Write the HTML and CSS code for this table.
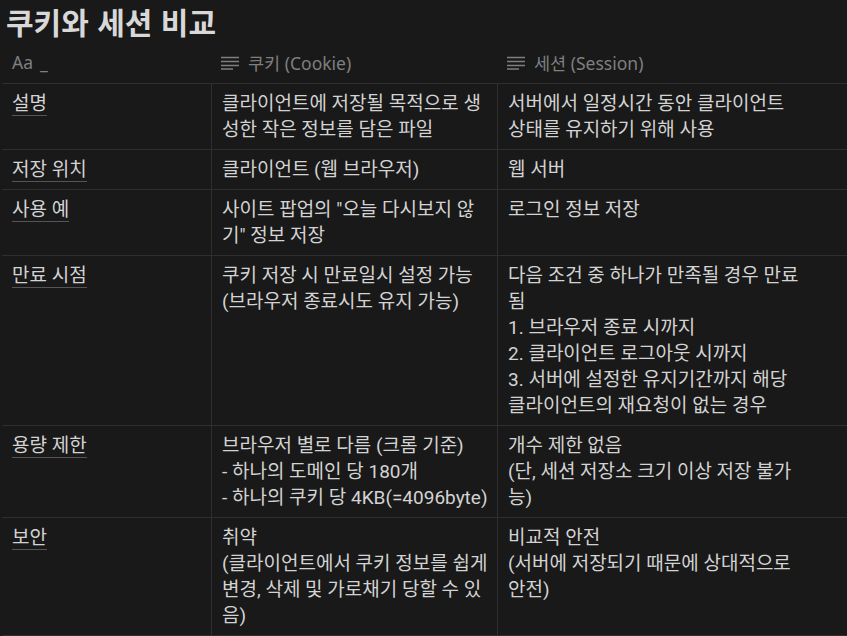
FILE: index.html
```html
<!DOCTYPE html>
<html lang="ko">
<head>
<meta charset="utf-8">
<title>쿠키와 세션 비교</title>
<link rel="stylesheet" href="styles.css">
</head>
<body>
<div class="page">
  <h1 class="title">쿠키와 세션 비교</h1>
  <div class="table">
    <div class="row head">
      <div class="hcell"><span class="aa">Aa</span><span class="hname">_</span></div>
      <div class="hcell"><svg class="ticon" width="18" height="14" viewBox="0 0 18 14"><path d="M0 1.5H18M0 5.5H18M0 9.5H18M0 13H12" stroke="#7f7f7f" stroke-width="1.4" fill="none"/></svg><span class="hname">쿠키 (Cookie)</span></div>
      <div class="hcell"><svg class="ticon" width="18" height="14" viewBox="0 0 18 14"><path d="M0 1.5H18M0 5.5H18M0 9.5H18M0 13H12" stroke="#7f7f7f" stroke-width="1.4" fill="none"/></svg><span class="hname">세션 (Session)</span></div>
      <div class="hcell filler"></div>
    </div>
    <div class="row">
      <div class="cell first"><span class="name">설명</span></div>
      <div class="cell">클라이언트에 저장될 목적으로 생<br>성한 작은 정보를 담은 파일</div>
      <div class="cell">서버에서 일정시간 동안 클라이언트<br>상태를 유지하기 위해 사용</div>
      <div class="cell filler"></div>
    </div>
    <div class="row">
      <div class="cell first"><span class="name">저장 위치</span></div>
      <div class="cell">클라이언트 (웹 브라우저)</div>
      <div class="cell">웹 서버</div>
      <div class="cell filler"></div>
    </div>
    <div class="row">
      <div class="cell first"><span class="name">사용 예</span></div>
      <div class="cell">사이트 팝업의 "오늘 다시보지 않<br>기" 정보 저장</div>
      <div class="cell">로그인 정보 저장</div>
      <div class="cell filler"></div>
    </div>
    <div class="row">
      <div class="cell first"><span class="name">만료 시점</span></div>
      <div class="cell">쿠키 저장 시 만료일시 설정 가능<br>(브라우저 종료시도 유지 가능)</div>
      <div class="cell">다음 조건 중 하나가 만족될 경우 만료<br>됨<br>1. 브라우저 종료 시까지<br>2. 클라이언트 로그아웃 시까지<br>3. 서버에 설정한 유지기간까지 해당<br>클라이언트의 재요청이 없는 경우</div>
      <div class="cell filler"></div>
    </div>
    <div class="row">
      <div class="cell first"><span class="name">용량 제한</span></div>
      <div class="cell">브라우저 별로 다름 (크롬 기준)<br>- 하나의 도메인 당 180개<br>- 하나의 쿠키 당 4KB(=4096byte)</div>
      <div class="cell">개수 제한 없음<br>(단, 세션 저장소 크기 이상 저장 불가<br>능)</div>
      <div class="cell filler"></div>
    </div>
    <div class="row">
      <div class="cell first"><span class="name">보안</span></div>
      <div class="cell">취약<br>(클라이언트에서 쿠키 정보를 쉽게<br>변경, 삭제 및 가로채기 당할 수 있<br>음)</div>
      <div class="cell">비교적 안전<br>(서버에 저장되기 때문에 상대적으로<br>안전)</div>
      <div class="cell filler"></div>
    </div>
  </div>
</div>
</body>
</html>
```
FILE: styles.css
```css
html, body {
  margin: 0;
  padding: 0;
  background: #191919;
}
body {
  font-family: "Roboto", "Noto Sans CJK KR", sans-serif;
  color: #d3d3d3;
  overflow: hidden;
}
.page {
  width: 847px;
}
.title {
  margin: 0;
  padding: 1px 0 0 6px;
  line-height: 40px;
  font-size: 30px;
  font-weight: 700;
  color: #d8d8d8;
  font-family: "Noto Sans CJK KR", sans-serif;
}
.table {
  margin-left: 2px;
}
.row {
  display: grid;
  grid-template-columns: 209px 286px 316px 1fr;
  border-bottom: 1px solid #2f2f2f;
}
.head {
  height: 42px;
}
.hcell {
  display: flex;
  align-items: center;
  gap: 9px;
  padding: 0 10px;
  color: #7f7f7f;
  font-size: 17.5px;
  font-family: "Noto Sans", "Noto Sans CJK KR", sans-serif;
}
.aa {
  margin-right: -2px;
}
.ticon {
  flex: none;
  margin-top: 1px;
}
.cell {
  padding: 7px 10px 6px 10px;
  font-size: 19px;
  line-height: 26px;
  border-left: 1px solid #2f2f2f;
  white-space: nowrap;
}
.cell.first {
  border-left: none;
}
.cell.filler {
  border-left: none;
}
.name {
  border-bottom: 1px solid #555555;
}
```
